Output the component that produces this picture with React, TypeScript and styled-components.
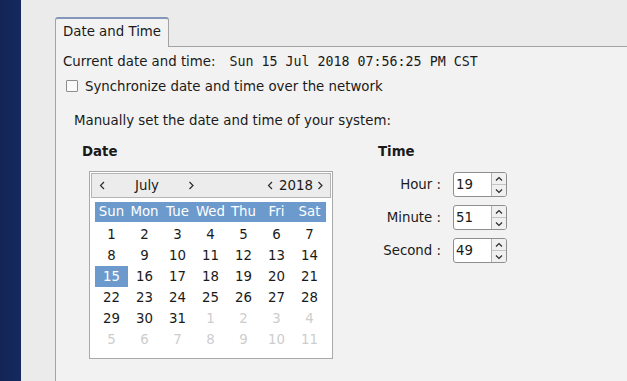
import React from 'react';
import styled, { createGlobalStyle } from 'styled-components';

const GlobalStyle = createGlobalStyle`
  html, body {
    margin: 0;
    padding: 0;
    overflow: hidden;
  }
  body {
    font-family: 'DejaVu Sans', 'Liberation Sans', sans-serif;
    font-size: 13.33px;
    color: #1a1a1a;
  }
`;

const WEEKDAYS = ['Sun', 'Mon', 'Tue', 'Wed', 'Thu', 'Fri', 'Sat'];

// july 2018 starts on sunday, trailing days from august are greyed out
const DAYS: { n: number; other?: boolean }[] = [
  ...Array.from({ length: 31 }, (_, i) => ({ n: i + 1 })),
  ...Array.from({ length: 11 }, (_, i) => ({ n: i + 1, other: true })),
];

const TIME_FIELDS = [
  { label: 'Hour :', value: '19' },
  { label: 'Minute :', value: '51' },
  { label: 'Second :', value: '49' },
];

const Chevron: React.FC<{ dir: 'left' | 'right' | 'up' | 'down' }> = ({ dir }) => {
  const d = {
    left: 'M5 1 L1.5 4.5 L5 8',
    right: 'M1.5 1 L5 4.5 L1.5 8',
    up: 'M1 4.5 L4 1.5 L7 4.5',
    down: 'M1 1.5 L4 4.5 L7 1.5',
  }[dir];
  const vertical = dir === 'up' || dir === 'down';
  return (
    <svg width={vertical ? 8 : 7} height={vertical ? 6 : 9} viewBox={vertical ? '0 0 8 6' : '0 0 7 9'}>
      <path d={d} fill="none" stroke="#2b2b2b" strokeWidth="1.2" />
    </svg>
  );
};

const App: React.FC = () => {
  return (
    <>
      <GlobalStyle />
      <Screen>
        <Desktop />
        <Window>
          <TabStrip>
            <Tab>Date and Time</Tab>
            <TabRest />
          </TabStrip>
          <Page>
            <CurrentRow>
              Current date and time:
              <Mono>Sun 15 Jul 2018 07:56:25 PM CST</Mono>
            </CurrentRow>
            <CheckRow>
              <CheckBox />
              Synchronize date and time over the network
            </CheckRow>
            <Hint>Manually set the date and time of your system:</Hint>
            <Columns>
              <DateColumn>
                <Heading>Date</Heading>
                <Calendar>
                  <CalendarHeader>
                    <NavGroup>
                      <NavButton><Chevron dir="left" /></NavButton>
                      <MonthLabel>July</MonthLabel>
                      <NavButton><Chevron dir="right" /></NavButton>
                    </NavGroup>
                    <NavGroup>
                      <NavButton><Chevron dir="left" /></NavButton>
                      <YearLabel>2018</YearLabel>
                      <NavButton><Chevron dir="right" /></NavButton>
                    </NavGroup>
                  </CalendarHeader>
                  <WeekRow>
                    {WEEKDAYS.map((w) => (
                      <WeekDay key={w}>{w}</WeekDay>
                    ))}
                  </WeekRow>
                  <DayGrid>
                    {DAYS.map((d, i) => (
                      <Day key={i} $other={d.other} $selected={!d.other && d.n === 15}>
                        {d.n}
                      </Day>
                    ))}
                  </DayGrid>
                </Calendar>
              </DateColumn>
              <TimeColumn>
                <Heading>Time</Heading>
                <TimeGrid>
                  {TIME_FIELDS.map((f) => (
                    <React.Fragment key={f.label}>
                      <TimeLabel>{f.label}</TimeLabel>
                      <Spin>
                        <SpinEntry>{f.value}</SpinEntry>
                        <SpinButtons>
                          <SpinButton><Chevron dir="up" /></SpinButton>
                          <SpinButton><Chevron dir="down" /></SpinButton>
                        </SpinButtons>
                      </Spin>
                    </React.Fragment>
                  ))}
                </TimeGrid>
              </TimeColumn>
            </Columns>
          </Page>
        </Window>
      </Screen>
    </>
  );
};

export default App;

const Screen = styled.div`
  display: flex;
  width: 627px;
  height: 381px;
  overflow: hidden;
`;

const Desktop = styled.div`
  width: 21px;
  flex-shrink: 0;
  background: linear-gradient(90deg, #132454 0%, #15295f 100%);
`;

const Window = styled.div`
  flex: 1;
  display: flex;
  flex-direction: column;
  background: #ebebeb;
  padding: 17px 0 0 34px;
`;

const TabStrip = styled.div`
  display: flex;
  align-items: flex-end;
  height: 30px;
`;

const Tab = styled.div`
  box-sizing: border-box;
  width: 114px;
  height: 30px;
  padding: 5px 0 0 7px;
  line-height: 16px;
  background: #f2f2f2;
  border: 1px solid #a3a3a3;
  border-top: 2px solid #8397b8;
  border-bottom: none;
  border-radius: 3px 3px 0 0;
`;

const TabRest = styled.div`
  flex: 1;
  border-bottom: 1px solid #a3a3a3;
`;

const Page = styled.div`
  flex: 1;
  background: #f2f2f2;
  border-left: 1px solid #a3a3a3;
  padding: 7px 0 0 7px;
`;

const CurrentRow = styled.div`
  display: flex;
  align-items: center;
  height: 16px;
  line-height: 16px;
`;

const Mono = styled.span`
  font-family: 'DejaVu Sans Mono', 'Liberation Mono', monospace;
  font-size: 13.3px;
  margin-left: 14px;
`;

const CheckRow = styled.label`
  display: flex;
  align-items: center;
  gap: 7px;
  height: 16px;
  margin-top: 8px;
  padding-left: 3px;
`;

const CheckBox = styled.span`
  box-sizing: border-box;
  width: 12px;
  height: 12px;
  border: 1px solid #8c8c8c;
  background: #fafafa;
  border-radius: 1px;
`;

const Hint = styled.div`
  margin: 19px 0 0 11px;
  line-height: 16px;
`;

const Columns = styled.div`
  display: flex;
  margin: 15px 0 0 19px;
`;

const DateColumn = styled.div`
  width: 296px;
  display: flex;
  flex-direction: column;
`;

const Heading = styled.div`
  font-weight: bold;
  line-height: 16px;
`;

const Calendar = styled.div`
  box-sizing: border-box;
  width: 244px;
  height: 188px;
  margin: 11px 0 0 7px;
  background: #ffffff;
  border: 1px solid #a9a9a9;
  padding: 1px 1px 0 1px;
`;

const CalendarHeader = styled.div`
  box-sizing: border-box;
  height: 25px;
  display: flex;
  justify-content: space-between;
  align-items: center;
  background: #ececec;
  border: 1px solid #b5b5b5;
  padding: 0 5px 0 6px;
`;

const NavGroup = styled.div`
  display: flex;
  align-items: center;
`;

const NavButton = styled.span`
  display: flex;
  align-items: center;
  justify-content: center;
  width: 9px;
  height: 16px;
`;

const MonthLabel = styled.span`
  width: 80px;
  text-align: center;
`;

const YearLabel = styled.span`
  margin: 0 3px 0 4px;
`;

const WeekRow = styled.div`
  display: grid;
  grid-template-columns: repeat(7, 33px);
  width: 231px;
  height: 20px;
  margin: 4px 0 0 4px;
  background: #6c9acd;
  color: #ffffff;
`;

const WeekDay = styled.span`
  text-align: center;
  line-height: 20px;
`;

const DayGrid = styled.div`
  display: grid;
  grid-template-columns: repeat(7, 33px);
  grid-auto-rows: 21px;
  width: 231px;
  margin: 2px 0 0 4px;
`;

const Day = styled.span<{ $other?: boolean; $selected?: boolean }>`
  text-align: center;
  line-height: 21px;
  color: ${(p) => (p.$other ? '#cdcdcd' : p.$selected ? '#ffffff' : '#1a1a1a')};
  background: ${(p) => (p.$selected ? '#6c9acd' : 'transparent')};
`;

const TimeColumn = styled.div`
  display: flex;
  flex-direction: column;
`;

const TimeGrid = styled.div`
  display: grid;
  grid-template-columns: 63px 54px;
  grid-auto-rows: 25px;
  column-gap: 12px;
  row-gap: 8px;
  margin-top: 12px;
  align-items: center;
`;

const TimeLabel = styled.span`
  text-align: right;
`;

const Spin = styled.div`
  box-sizing: border-box;
  display: flex;
  height: 25px;
  border: 1px solid #8e8e8e;
  border-radius: 3px;
  background: #ffffff;
  overflow: hidden;
`;

const SpinEntry = styled.span`
  flex: 1;
  padding-left: 2px;
  line-height: 23px;
`;

const SpinButtons = styled.div`
  width: 14px;
  display: flex;
  flex-direction: column;
  border-left: 1px solid #b0b0b0;
  background: #f0f0f0;
`;

const SpinButton = styled.span`
  flex: 1;
  display: flex;
  align-items: center;
  justify-content: center;
  & + & {
    border-top: 1px solid #c4c4c4;
  }
`;
